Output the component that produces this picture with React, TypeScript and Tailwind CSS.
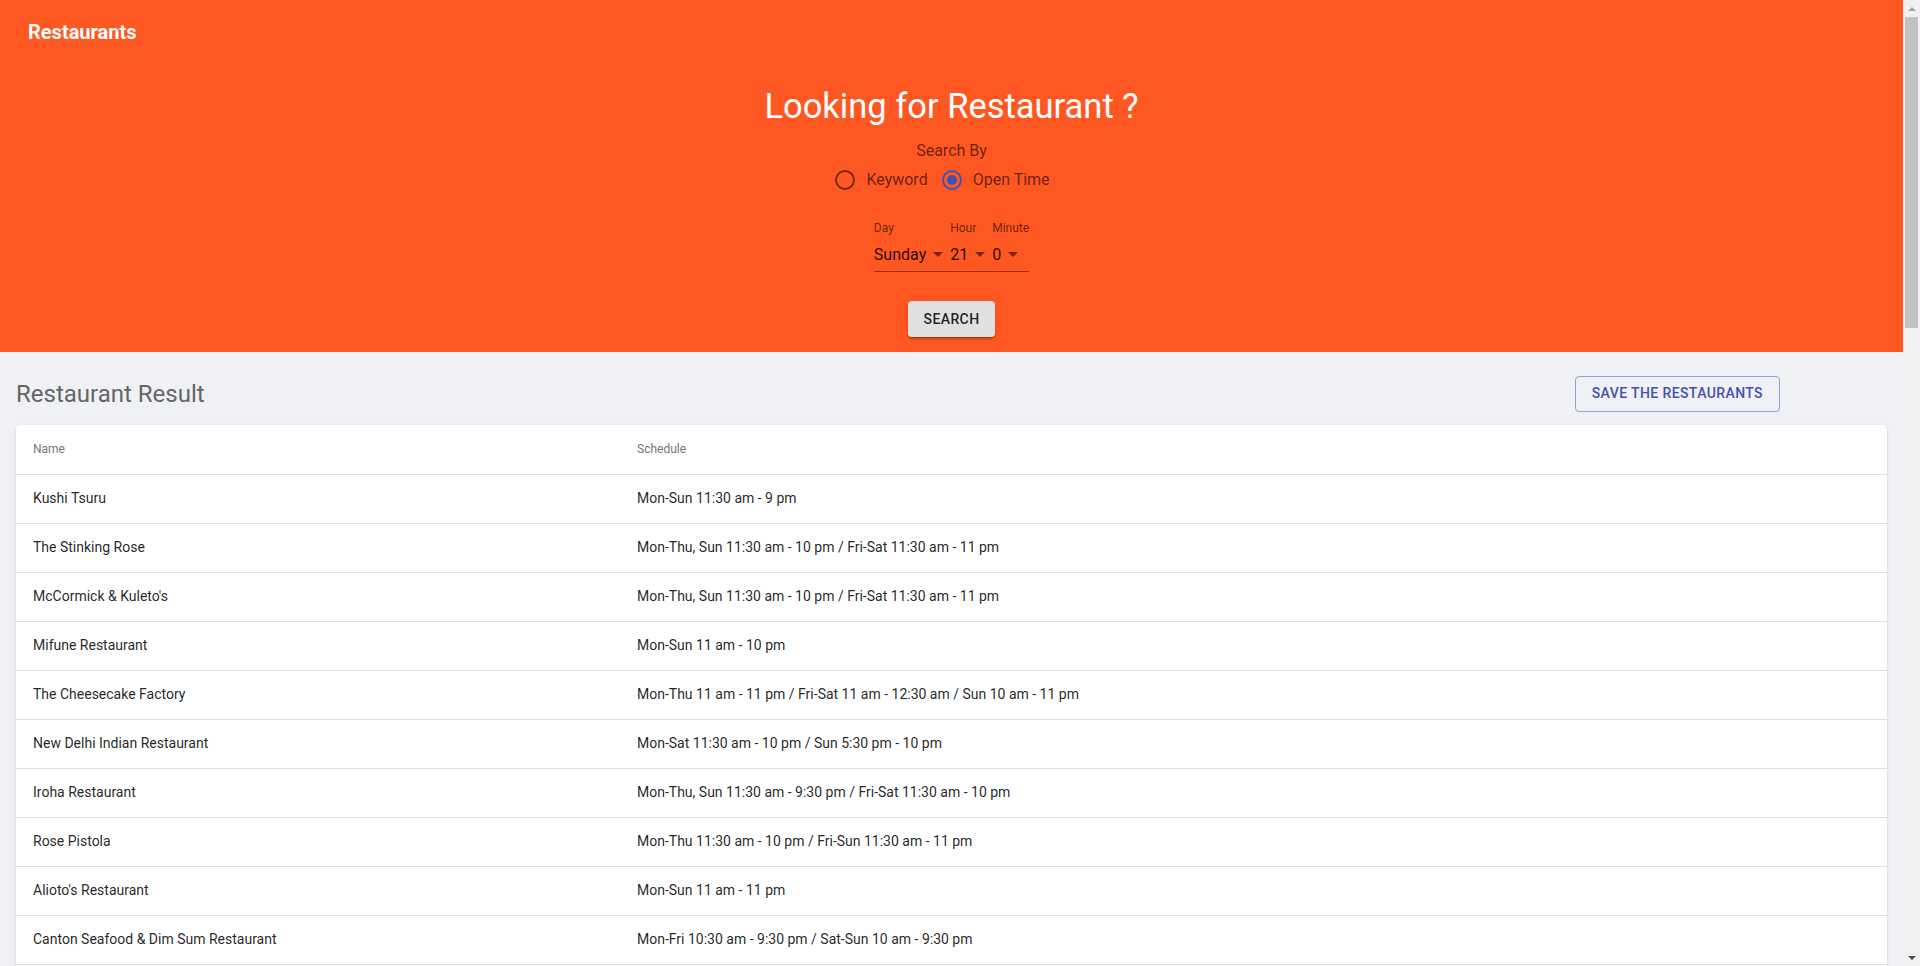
import React from 'react';

type Restaurant = { name: string; schedule: string };

const restaurants: Restaurant[] = [
  { name: 'Kushi Tsuru', schedule: 'Mon-Sun 11:30 am - 9 pm' },
  { name: 'The Stinking Rose', schedule: 'Mon-Thu, Sun 11:30 am - 10 pm / Fri-Sat 11:30 am - 11 pm' },
  { name: "McCormick & Kuleto's", schedule: 'Mon-Thu, Sun 11:30 am - 10 pm / Fri-Sat 11:30 am - 11 pm' },
  { name: 'Mifune Restaurant', schedule: 'Mon-Sun 11 am - 10 pm' },
  { name: 'The Cheesecake Factory', schedule: 'Mon-Thu 11 am - 11 pm / Fri-Sat 11 am - 12:30 am / Sun 10 am - 11 pm' },
  { name: 'New Delhi Indian Restaurant', schedule: 'Mon-Sat 11:30 am - 10 pm / Sun 5:30 pm - 10 pm' },
  { name: 'Iroha Restaurant', schedule: 'Mon-Thu, Sun 11:30 am - 9:30 pm / Fri-Sat 11:30 am - 10 pm' },
  { name: 'Rose Pistola', schedule: 'Mon-Thu 11:30 am - 10 pm / Fri-Sun 11:30 am - 11 pm' },
  { name: "Alioto's Restaurant", schedule: 'Mon-Sun 11 am - 11 pm' },
  { name: 'Canton Seafood & Dim Sum Restaurant', schedule: 'Mon-Fri 10:30 am - 9:30 pm / Sat-Sun 10 am - 9:30 pm' },
  { name: 'All Season Restaurant', schedule: 'Mon-Fri 10 am - 9:30 pm / Sat-Sun 9:30 am - 9:30 pm' },
  { name: 'Bombay Indian Restaurant', schedule: 'Mon-Sun 11:30 am - 10:30 pm' },
  { name: '2G Japanese Brasserie', schedule: 'Mon-Thu, Sun 11 am - 10 pm / Fri-Sat 11 am - 11 pm' },
  { name: 'Restaurant Lulu', schedule: 'Mon-Thu, Sun 11:30 am - 9:30 pm / Fri-Sat 11:30 am - 10 pm' },
  { name: 'Sudachi', schedule: 'Mon-Wed 5 pm - 12:30 am / Thu-Fri 5 pm - 1:30 am / Sat 3 pm - 1:30 am / Sun 3 pm - 11:30 pm' },
  { name: 'Hanuri', schedule: 'Mon-Sun 11 am - 12 am' },
  { name: 'Herbivore', schedule: 'Mon-Thu, Sun 9 am - 10 pm / Fri-Sat 9 am - 11 pm' },
  { name: 'Penang Garden', schedule: 'Mon-Thu 11 am - 10 pm / Fri-Sat 10 am - 10:30 pm / Sun 11 am - 11 pm' },
  { name: "John's Grill", schedule: 'Mon-Sat 11 am - 10 pm / Sun 12 pm - 10 pm' },
  { name: 'Quan Bac', schedule: 'Mon-Sun 11 am - 10 pm' },
  { name: 'Bamboo Restaurant', schedule: 'Mon-Sat 11 am - 12 am / Sun 12 pm - 12 am' },
  { name: 'Burger Bar', schedule: 'Mon-Thu, Sun 11 am - 10 pm / Fri-Sat 11 am - 12 am' },
  { name: "Naan 'N' Curry", schedule: 'Mon-Sun 11 am - 4 am' },
  { name: 'Shanghai China Restaurant', schedule: 'Mon-Sun 11 am - 9:30 pm' },
  { name: 'Tres', schedule: 'Mon-Thu, Sun 11:30 am - 10 pm / Fri-Sat 11:30 am - 11 pm' },
  { name: 'Isobune Sushi', schedule: 'Mon-Sun 11:30 am - 9:30 pm' },
  { name: 'Viva Pizza Restaurant', schedule: 'Mon-Sun 11 am - 12 am' },
  { name: 'Far East Cafe', schedule: 'Mon-Sun 11:30 am - 10 pm' },
  { name: 'Parallel 37', schedule: 'Mon-Sun 11:30 am - 10 pm' },
  { name: 'Bai Thong Thai Cuisine', schedule: 'Mon-Sat 11 am - 11 pm / Sun 11 am - 10 pm' },
  { name: 'Alhamra', schedule: 'Mon-Sun 11 am - 11 pm' },
  { name: "Nick's Lighthouse", schedule: 'Mon-Sun 11 am - 10:30 pm' },
  { name: 'Bow Hon Restaurant', schedule: 'Mon-Sun 11 am - 10:30 pm' },
  { name: 'San Dong House', schedule: 'Mon-Sun 11 am - 11 pm' },
  { name: 'The Great Eastern Restaurant', schedule: 'Mon-Sun 11 am - 12 am' },
  { name: 'Sunflower Restaurant', schedule: 'Mon-Sun 11 am - 10 pm' },
  { name: 'Cha Cha Cha', schedule: 'Mon-Thu, Sun 11:30 am - 11 pm / Fri-Sat 11:30 am - 11:30 pm' },
  { name: 'Sushi Bistro', schedule: 'Mon-Sun 11:30 am - 10 pm' },
  { name: 'Seven Hills', schedule: 'Mon-Sun 5:30 pm - 10 pm' },
  { name: 'The Brazen Head', schedule: 'Mon-Sun 11 am - 1 am' },
  { name: 'Taqueria Cancun', schedule: 'Mon-Sun 10 am - 1 am' },
  { name: 'Ozumo', schedule: 'Mon-Sun 5:30 pm - 10:30 pm' },
  { name: 'Marrakech Moroccan Restaurant', schedule: 'Mon-Sun 5:30 pm - 2 am' },
  { name: 'Kyoto Sushi', schedule: 'Mon-Thu 11 am - 10:30 pm / Fri 11 am - 11 pm / Sat 11:30 am - 11 pm / Sun 4:30 pm - 10:30 pm' },
  { name: 'Zen Yai Thai Restaurant', schedule: 'Mon-Sun 11 am - 10 pm' },
  { name: "Santorini's Mediterranean Cuisine", schedule: 'Mon-Sun 8 am - 10:30 pm' },
  { name: 'Sabella & La Torre', schedule: 'Mon-Thu, Sun 10 am - 10:30 pm / Fri-Sat 10 am - 12:30 am' },
  { name: 'Tong Palace', schedule: 'Mon-Fri 9 am - 9:30 pm / Sat-Sun 9 am - 10 pm' },
];

function RadioOption({ label, checked }: { label: string; checked?: boolean }) {
  return (
    <label className="flex items-center">
      <svg viewBox="0 0 24 24" className="h-6 w-6">
        <circle
          cx="12"
          cy="12"
          r="9"
          fill="none"
          strokeWidth="2"
          stroke={checked ? '#3f51b5' : 'rgba(0,0,0,0.54)'}
        />
        {checked && <circle cx="12" cy="12" r="5" fill="#3f51b5" />}
      </svg>
      <span className="ml-[9px] text-[16px] leading-6 text-[rgba(0,0,0,0.6)]">{label}</span>
    </label>
  );
}

function SelectField({ label, value }: { label: string; value: string }) {
  return (
    <div className="flex flex-col">
      <span className="h-4 text-[12px] leading-3 text-[rgba(0,0,0,0.6)]">{label}</span>
      <div className="flex items-center border-b border-[rgba(0,0,0,0.42)] pt-1 pb-[5px]">
        <span className="text-[16px] leading-[23px] text-[rgba(0,0,0,0.87)]">{value}</span>
        <svg viewBox="0 0 24 24" className="h-6 w-6">
          <path d="M7 10l5 5 5-5z" fill="rgba(0,0,0,0.54)" />
        </svg>
      </div>
    </div>
  );
}

// window scrollbar, as the browser in the reference draws it
function ScrollBar() {
  return (
    <div className="flex h-screen w-[17px] shrink-0 flex-col bg-[#f1f1f1]">
      <div className="flex h-[17px] items-center justify-center">
        <svg viewBox="0 0 8 4" className="h-1 w-2">
          <path d="M0 4L4 0L8 4z" fill="#a3a3a3" />
        </svg>
      </div>
      <div className="mx-[2px] h-[311px] bg-[#c1c1c1]" />
      <div className="flex-1" />
      <div className="flex h-[17px] items-center justify-center">
        <svg viewBox="0 0 8 4" className="h-1 w-2">
          <path d="M0 0L8 0L4 4z" fill="#505050" />
        </svg>
      </div>
    </div>
  );
}

export default function App() {
  return (
    <div className="flex h-screen font-['Roboto',sans-serif]">
      <div className="h-screen flex-1 overflow-y-auto bg-[#f0f1f5] [scrollbar-width:none]">
        <header className="bg-[#ff5722]">
          <div className="flex h-16 items-center pl-[28px]">
            <h6 className="text-[20px] font-bold text-white">Restaurants</h6>
          </div>
          <div className="flex flex-col items-center pb-[15px]">
            <h1 className="mt-[21px] text-[34.5px] leading-[42px] text-white">Looking for Restaurant ?</h1>
            <div className="mt-[14px] text-[16px] leading-5 text-[rgba(0,0,0,0.6)]">Search By</div>
            <div className="flex h-[38px] items-center gap-3 pr-5">
              <RadioOption label="Keyword" />
              <RadioOption label="Open Time" checked />
            </div>
            <div className="mt-[23px] flex">
              <SelectField label="Day" value="Sunday" />
              <SelectField label="Hour" value="21" />
              <SelectField label="Minute" value="0" />
            </div>
            <button className="mt-[29px] h-9 rounded bg-[#e0e0e0] px-4 text-[14px] font-medium tracking-[0.4px] text-[rgba(0,0,0,0.87)] shadow-[0px_3px_1px_-2px_rgba(0,0,0,0.2),0px_2px_2px_0px_rgba(0,0,0,0.14),0px_1px_5px_0px_rgba(0,0,0,0.12)]">
              SEARCH
            </button>
          </div>
        </header>

        <main className="px-4 pt-6 pb-10">
          <div className="flex h-[35px] items-center justify-between">
            <h2 className="text-[24px] text-[#666666]">Restaurant Result</h2>
            <button className="mr-[107px] h-9 rounded border border-[rgba(63,81,181,0.5)] px-4 text-[14px] font-medium tracking-[0.4px] text-[#3f51b5]">
              SAVE THE RESTAURANTS
            </button>
          </div>

          <div className="mt-[14px] rounded bg-white shadow-[0px_2px_1px_-1px_rgba(0,0,0,0.2),0px_1px_1px_0px_rgba(0,0,0,0.14),0px_1px_3px_0px_rgba(0,0,0,0.12)]">
            <table className="w-full border-collapse text-left">
              <thead>
                <tr className="h-[49px] border-b border-[#e0e0e0]">
                  <th className="w-[605px] pl-[17px] text-[12px] font-normal text-[#757575]">Name</th>
                  <th className="pl-4 text-[12px] font-normal text-[#757575]">Schedule</th>
                </tr>
              </thead>
              <tbody>
                {restaurants.map((r) => (
                  <tr key={r.name} className="h-[49px] border-b border-[#e0e0e0]">
                    <td className="pl-[17px] text-[14px] text-[rgba(0,0,0,0.87)]">{r.name}</td>
                    <td className="pl-4 text-[14px] text-[rgba(0,0,0,0.87)]">{r.schedule}</td>
                  </tr>
                ))}
              </tbody>
            </table>
          </div>
        </main>
      </div>
      <ScrollBar />
    </div>
  );
}
